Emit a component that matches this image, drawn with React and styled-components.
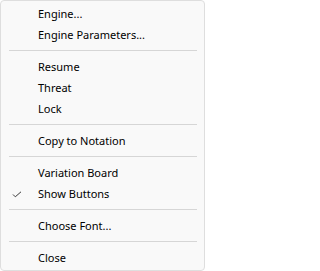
import React from "react";
import styled, { createGlobalStyle } from "styled-components";

const Global = createGlobalStyle`
  html, body { margin: 0; padding: 0; background: #ffffff; }
  body { font-family: "Segoe UI", "Noto Sans", sans-serif; }
`;

const Menu = styled.div`
  box-sizing: border-box;
  width: 205px;
  height: 271px;
  background: #f9f9f9;
  border: 1px solid #dedede;
  border-radius: 4px;
  padding: 2px 0;
  display: flex;
  flex-direction: column;
`;

const Item = styled.div`
  position: relative;
  height: 21px;
  display: flex;
  align-items: center;
  padding-left: 37px;
  font-family: "Segoe UI", "Noto Sans", sans-serif;
  font-size: 11px;
  line-height: 21px;
  color: #000000;
  white-space: nowrap;
`;

const Check = styled.svg`
  position: absolute;
  left: 11px;
  top: 8px;
  width: 10px;
  height: 7px;
`;

const Separator = styled.div`
  height: 11px;
  display: flex;
  align-items: center;
  padding: 0 7px 0 8px;
  &::after {
    content: "";
    flex: 1;
    height: 1px;
    background: #d6d6d6;
  }
`;

const entries = [
  "Engine...",
  "Engine Parameters...",
  "-",
  "Resume",
  "Threat",
  "Lock",
  "-",
  "Copy to Notation",
  "-",
  "Variation Board",
  { label: "Show Buttons", checked: true },
  "-",
  "Choose Font...",
  "-",
  "Close",
];

export default function App() {
  return (
    <>
      <Global />
      <Menu>
        {entries.map((e, i) => {
          if (e === "-") return <Separator key={i} />;
          const label = typeof e === "string" ? e : e.label;
          const checked = typeof e === "object" && e.checked;
          return (
            <Item key={i}>
              {checked && (
                <Check viewBox="0 0 10 7">
                  <polyline
                    points="1,3.5 3.3,5.8 9,0.8"
                    fill="none"
                    stroke="#3a3a3a"
                    strokeWidth="1"
                  />
                </Check>
              )}
              {label}
            </Item>
          );
        })}
      </Menu>
    </>
  );
}
